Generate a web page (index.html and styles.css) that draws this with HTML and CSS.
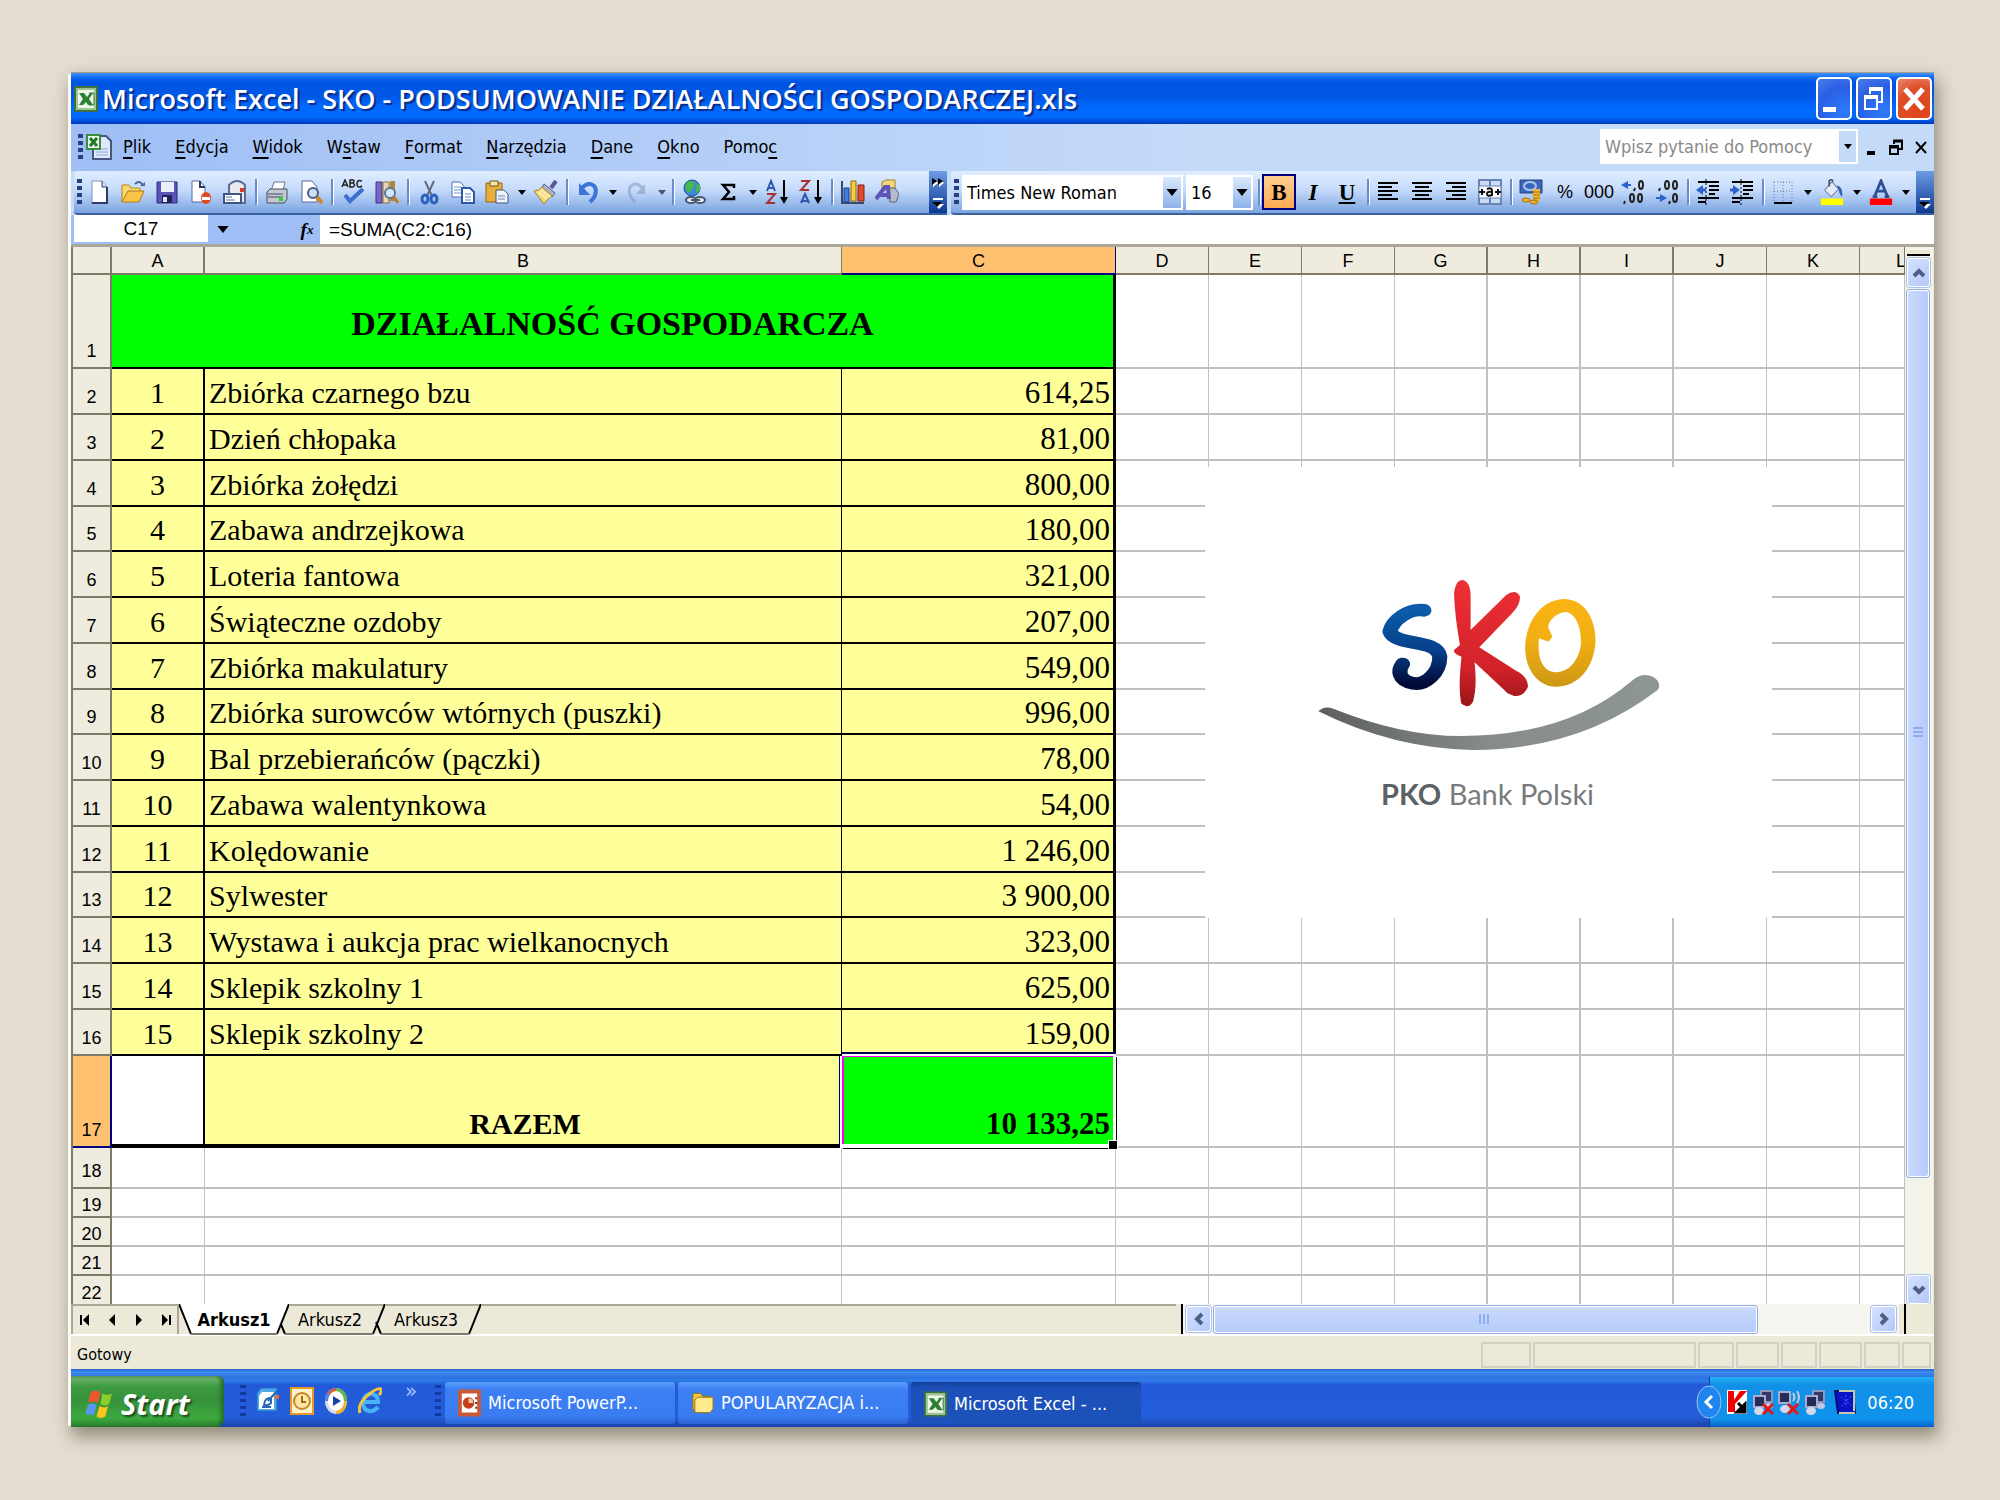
FILE: index.html
```html
<!DOCTYPE html>
<html lang="pl">
<head>
<meta charset="utf-8">
<title>Microsoft Excel - SKO - PODSUMOWANIE DZIAŁALNOŚCI GOSPODARCZEJ.xls</title>
<link rel="stylesheet" href="styles.css">
</head>
<body>
<svg class="defs" aria-hidden="true">
  <defs>
    <linearGradient id="gS" x1="0" y1="0" x2="0" y2="1"><stop offset="0" stop-color="#0c5cab"/><stop offset=".55" stop-color="#06408a"/><stop offset="1" stop-color="#020b38"/></linearGradient>
    <linearGradient id="gK" gradientUnits="userSpaceOnUse" x1="0" y1="360" x2="0" y2="740"><stop offset="0" stop-color="#ee2f35"/><stop offset=".7" stop-color="#d3222a"/><stop offset="1" stop-color="#971418"/></linearGradient>
    <linearGradient id="gO" x1="0" y1="0" x2="0" y2="1"><stop offset="0" stop-color="#fbb414"/><stop offset=".5" stop-color="#f0ae12"/><stop offset="1" stop-color="#cd9716"/></linearGradient>
    <linearGradient id="gG" x1="0" y1="0" x2="1" y2="0"><stop offset="0" stop-color="#5d5f5f"/><stop offset=".5" stop-color="#878b8b"/><stop offset="1" stop-color="#8e9696"/></linearGradient>
  </defs>
  <symbol id="down" viewBox="0 0 8 5"><path d="M0 0h8L4 5z"/></symbol>
  <symbol id="xl" viewBox="0 0 24 26"><path d="M1 1h22v24H1z" fill="#eef6ea" stroke="#3f7040" stroke-width="2"/><path d="M3 3h18v20H3z" fill="none" stroke="#9cc592" stroke-width="2"/><path d="M5 7h5l3 4 3-4h3l-4 6 4 6h-5l-2-3-3 3H5l4-6z" fill="#2d7f35"/><path d="M15 7h5v12h-5" fill="none" stroke="#2d7f35"/></symbol>
  <symbol id="pc" viewBox="0 0 22 26"><path d="M9 2h11v11H9z" fill="#33386b" stroke="#8d97c0" stroke-width="2"/><ellipse cx="17" cy="17" rx="4" ry="3" fill="#c3c7df"/><path d="M2 7h11v11H2z" fill="#262b57" stroke="#a5aecf" stroke-width="2"/><ellipse cx="7" cy="22" rx="5" ry="4" fill="#d5d8ea"/></symbol>
  <symbol id="rx" viewBox="0 0 12 12"><path d="M1 1l10 10M11 1L1 11" stroke="#e01818" stroke-width="3"/></symbol>
</svg>

<main class="window">
  <header class="titlebar">
    <svg class="app-icon"><use href="#xl"/></svg>
    <h1>Microsoft Excel - SKO - PODSUMOWANIE DZIAŁALNOŚCI GOSPODARCZEJ.xls</h1>
    <button class="wbtn" aria-label="Minimalizuj"><svg viewBox="0 0 32 38"><path d="M5 27h13v5H5z" fill="#fff"/></svg></button>
    <button class="wbtn" aria-label="Przywróć"><svg viewBox="0 0 32 38"><path d="M12 14V9h12v13h-4" fill="none" stroke="#fff" stroke-width="2"/><path d="M11 9h14M6 17h14" stroke="#fff" stroke-width="4"/><path d="M7 17h12v12H7z" fill="none" stroke="#fff" stroke-width="2"/></svg></button>
    <button class="wbtn close" aria-label="Zamknij"><svg viewBox="0 0 32 38"><path d="M7 9l18 20M25 9L7 29" stroke="#fff" stroke-width="5"/></svg></button>
  </header>

  <nav class="menubar">
    <span class="grip"></span>
    <svg class="doc-icon" viewBox="0 0 26 28"><path d="M9 3h11l5 5v18H7V10z" fill="#dfe9fb" stroke="#43577f" stroke-width="2"/><path d="M10 16h12M10 19h12M10 22h12" stroke="#8aa6d8"/><path d="M1 2h13v14H1z" fill="#eaf6ea" stroke="#3a8c3e" stroke-width="2"/><path d="M4 5l7 8M11 5l-7 8" stroke="#237a2c" stroke-width="3"/></svg>
    <button><u>P</u>lik</button><button><u>E</u>dycja</button><button><u>W</u>idok</button><button>W<u>s</u>taw</button><button><u>F</u>ormat</button><button><u>N</u>arzędzia</button><button><u>D</u>ane</button><button><u>O</u>kno</button><button>Pomo<u>c</u></button>
    <div class="help"><input type="text" placeholder="Wpisz pytanie do Pomocy" aria-label="Wpisz pytanie do Pomocy"><button aria-label="Rozwiń"><svg class="dd"><use href="#down"/></svg></button></div>
    <div class="docbtns">
      <button aria-label="Minimalizuj skoroszyt"><svg viewBox="0 0 14 16"><path d="M3 12h8v4H3z"/></svg></button>
      <button aria-label="Przywróć skoroszyt"><svg viewBox="0 0 14 16"><path d="M5 5V2h8v8h-3M1 7h8v8H1z" fill="none" stroke="#000" stroke-width="2"/><path d="M4 2h10M0 8h10" stroke="#000" stroke-width="3"/></svg></button>
      <button aria-label="Zamknij skoroszyt"><svg viewBox="0 0 14 16"><path d="M2 3l10 11M12 3L2 14" stroke="#000" stroke-width="2"/></svg></button>
    </div>
  </nav>

  <div class="toolbars">
    <div class="toolbar standard">
      <span class="grip"></span>
      <button aria-label="Nowy"><svg viewBox="0 0 24 26"><path d="M5 2h10l5 6v16H5z" fill="#fff" stroke="#7f93bd"/><path d="M20 8v16H5" fill="none" stroke="#2c3c66" stroke-width="2"/><path d="M15 2v6h5" fill="#cfdcf5" stroke="#2c3c66"/></svg></button>
      <button aria-label="Otwórz"><svg viewBox="0 0 24 26"><path d="M1 23V6h7l2 3h9v4" fill="#f8d671" stroke="#b98519"/><path d="M1 23l6-11h16l-5 11z" fill="#fbc648" stroke="#b07a12"/><path d="M14 5q5-5 8 2" fill="none" stroke="#4c6a9c" stroke-width="2"/><path d="M19 7h5V3z" fill="#4c6a9c"/></svg></button>
      <button aria-label="Zapisz"><svg viewBox="0 0 24 26"><path d="M2 3h20v21H2z" fill="#5a54b8" stroke="#2f2b7c"/><path d="M6 3h13v10H6z" fill="#e9effc"/><path d="M7 16h10v8H7z" fill="#23225a"/><path d="M8 18h4v5H8z" fill="#dfe3f7"/></svg></button>
      <button aria-label="Uprawnienia"><svg viewBox="0 0 24 26"><path d="M3 2h8l5 6v15H3z" fill="#fff" stroke="#566c9a"/><path d="M11 2v6h5" fill="none" stroke="#2c3c66" stroke-width="2"/><ellipse cx="17" cy="19" rx="5" ry="6" fill="#e04a20"/><path d="M13 18h8v3h-8z" fill="#fff"/></svg></button>
      <button aria-label="Poczta"><svg viewBox="0 0 24 26"><path d="M6 13V6q8-8 16 0v18H10z" fill="#e9eaf0" stroke="#5c6d92" stroke-width="2"/><path d="M17 9h4v4h-4z" fill="#de3a22"/><path d="M1 15h17v9H1z" fill="#fff" stroke="#40557f" stroke-width="2"/><path d="M3 18h6M3 21h9" stroke="#4d74b4"/></svg></button>
      <span class="sep"></span>
      <button aria-label="Drukuj"><svg viewBox="0 0 24 26"><path d="M6 12l3-9h11l-2 9z" fill="#fff" stroke="#6b7690"/><path d="M2 13l3-3h17v10l-3 4H2z" fill="#c4c8d2" stroke="#434d66"/><path d="M3 15h15M3 18h15" stroke="#434d66"/><path d="M14 18h4v4h-4z" fill="#2bd234"/></svg></button>
      <button aria-label="Podgląd"><svg viewBox="0 0 24 26"><path d="M3 2h10l5 6v15H3z" fill="#fff" stroke="#566c9a"/><circle cx="14" cy="14" r="5" fill="#cbe1fa" stroke="#48607e" stroke-width="2"/><path d="M18 18l5 6" stroke="#d1852a" stroke-width="4"/></svg></button>
      <span class="sep"></span>
      <button aria-label="Pisownia"><svg viewBox="0 0 24 26"><path d="M1 8l3-7 3 7M2 6h4M9 1v7h3q3-2 0-4h-3h3q2-2 0-3zM21 2q-5-2-5 3t5 2" fill="none" stroke="#222" stroke-width="1.5"/><path d="M4 16l5 6L22 10" fill="none" stroke="#3d70cf" stroke-width="4"/></svg></button>
      <button aria-label="Poszukaj"><svg viewBox="0 0 24 26"><path d="M1 3h6v21H1z" fill="#7a66c4" stroke="#3f3286"/><path d="M8 3h6v21H8z" fill="#e5d9b3" stroke="#85713a"/><path d="M15 2h5v20h-5z" fill="#b3863b"/><circle cx="15" cy="14" r="5" fill="#d5e7fb" stroke="#61778e" stroke-width="2"/><path d="M19 18l4 6" stroke="#bb7f23" stroke-width="3"/></svg></button>
      <span class="sep"></span>
      <button aria-label="Wytnij"><svg viewBox="0 0 24 26"><path d="M8 2l7 15M17 2l-7 15" stroke="#5e6b80" stroke-width="2"/><ellipse cx="8" cy="20" rx="3" ry="4" fill="none" stroke="#2b5fc0" stroke-width="3"/><ellipse cx="17" cy="20" rx="3" ry="4" fill="none" stroke="#2b5fc0" stroke-width="3"/></svg></button>
      <button aria-label="Kopiuj"><svg viewBox="0 0 24 26"><path d="M1 3h8l4 4v11H1z" fill="#fff" stroke="#4b70b8"/><path d="M3 8h7M3 11h7M3 14h7" stroke="#6d93d8"/><path d="M11 9h8l4 4v11H11z" fill="#fff" stroke="#2f57a4" stroke-width="2"/><path d="M14 15h6M14 18h6M14 21h6" stroke="#5d87d4"/></svg></button>
      <button aria-label="Wklej"><svg viewBox="0 0 24 26"><path d="M1 4h16v19H1z" fill="#e9ae3a" stroke="#94670f"/><path d="M5 2h8v5H5z" fill="#f4e7a8" stroke="#6b5a1a"/><path d="M11 11h8l4 4v9H11z" fill="#eef3fd" stroke="#40557f"/><path d="M13 17h7M13 20h7" stroke="#6b85b8"/></svg></button>
      <button class="drop" aria-label="Opcje wklejania"><svg class="dd"><use href="#down"/></svg></button>
      <button aria-label="Malarz formatów"><svg viewBox="0 0 24 26"><path d="M17 9l5-7" stroke="#5a559c" stroke-width="4"/><path d="M10 5l11 9-3 4L8 9z" fill="#a9b4c9" stroke="#59637a"/><path d="M8 8l10 9q-5 3-8 8L0 12q5 0 8-4z" fill="#f3d873" stroke="#a58422"/><path d="M4 13l9 7M7 11l9 7" stroke="#fbf0b8" stroke-width="2"/></svg></button>
      <span class="sep"></span>
      <button aria-label="Cofnij"><svg viewBox="0 0 24 26"><path d="M5 10q8-9 14-2 3 8-5 15" fill="none" stroke="#3b74d8" stroke-width="4"/><path d="M3 4v12h11z" fill="#3b74d8"/></svg></button>
      <button class="drop" aria-label="Lista cofania"><svg class="dd"><use href="#down"/></svg></button>
      <button class="dim" aria-label="Ponów"><svg viewBox="0 0 24 26"><path d="M18 10Q11 1 5 8q-3 8 5 15" fill="none" stroke="#8b9cbd" stroke-width="3"/><path d="M20 5v10H11z" fill="#8b9cbd"/></svg></button>
      <button class="drop dim" aria-label="Lista ponawiania"><svg class="dd"><use href="#down"/></svg></button>
      <span class="sep"></span>
      <button aria-label="Hiperłącze"><svg viewBox="0 0 24 26"><circle cx="10" cy="9" r="8" fill="#3d87df" stroke="#255192"/><path d="M4 4q6-4 9 0l-2 5-4 5q-5-4-3-10M14 6l4-1 0 6-4 4z" fill="#47b84b"/><ellipse cx="9" cy="21" rx="5" ry="3" fill="#e4e9f2" stroke="#4a5872" stroke-width="2"/><ellipse cx="18" cy="21" rx="5" ry="3" fill="#e4e9f2" stroke="#4a5872" stroke-width="2"/><path d="M9 21h9" stroke="#4a5872" stroke-width="2"/></svg></button>
      <button aria-label="Autosumowanie"><svg viewBox="0 0 24 26"><path d="M18 9V6H7l6 7-6 7h11v-3" fill="none" stroke="#000" stroke-width="2.5"/></svg></button>
      <button class="drop" aria-label="Funkcje"><svg class="dd"><use href="#down"/></svg></button>
      <button aria-label="Sortuj rosnąco"><svg class="sort" viewBox="0 0 24 26"><path d="M2 12L6 2l4 10M3 9h6" fill="none" stroke="#2b58ac" stroke-width="2"/><path d="M2 15h8l-8 9h8" fill="none" stroke="#a83232" stroke-width="2"/><path d="M19 1v22" stroke="#000" stroke-width="2"/><path d="M15 18h8l-4 7z"/></svg></button>
      <button aria-label="Sortuj malejąco"><svg class="sort" viewBox="0 0 24 26"><path d="M2 24l4-9 4 9M3 22h6" fill="none" stroke="#2b58ac" stroke-width="2"/><path d="M2 2h8l-8 9h8" fill="none" stroke="#a83232" stroke-width="2"/><path d="M19 1v22" stroke="#000" stroke-width="2"/><path d="M15 18h8l-4 7z"/></svg></button>
      <span class="sep"></span>
      <button aria-label="Kreator wykresów"><svg viewBox="0 0 24 26"><path d="M1 2v22h22" fill="none" stroke="#3c4963" stroke-width="2"/><path d="M3 9h5v14H3z" fill="#3f7ce0" stroke="#1d3f86"/><path d="M10 2h5v20h-5z" fill="#f5ce3c" stroke="#8f6b0c"/><path d="M17 6h6v16h-6z" fill="#e04b2a" stroke="#84200e"/></svg></button>
      <button aria-label="Rysowanie"><svg viewBox="0 0 24 26"><path d="M7 3l4-2h9v10H7z" fill="#f5d67a" stroke="#a98423"/><path d="M14 9h6l4 6-3 8h-6z" fill="#b5bccb" stroke="#5b6478"/><path d="M1 20L10 8h3l1 12M5 16h8" fill="none" stroke="#5e55b8" stroke-width="4"/></svg></button>
      <button class="cap" aria-label="Opcje paska Standardowy"><svg viewBox="0 0 18 44"><path d="M4 9l5 4-5 4zM10 9l5 4-5 4z" fill="#fff"/><path d="M3 8l5 3-5 4zM9 8l5 3-5 4z"/><path d="M4 28h10v2H4z" fill="#fff"/><path d="M5 34h10l-5 5z" fill="#fff"/><path d="M3 32h10l-5 5z"/></svg></button>
    </div>
    <div class="toolbar format">
      <span class="grip"></span>
      <span class="combo font"><select aria-label="Czcionka"><option>Times New Roman</option></select><i><svg class="dd big"><use href="#down"/></svg></i></span>
      <span class="combo size"><select aria-label="Rozmiar czcionki"><option>16</option></select><i><svg class="dd big"><use href="#down"/></svg></i></span>
      <span class="sep"></span>
      <button class="glyph on" aria-label="Pogrubienie" aria-pressed="true"><b>B</b></button>
      <button class="glyph" aria-label="Kursywa"><em>I</em></button>
      <button class="glyph" aria-label="Podkreślenie"><u>U</u></button>
      <span class="sep"></span>
      <button aria-label="Do lewej"><svg viewBox="0 0 24 26"><path d="M2 4h20M2 8h14M2 12h20M2 16h14M2 20h20" stroke="#000" stroke-width="2"/></svg></button>
      <button aria-label="Do środka"><svg viewBox="0 0 24 26"><path d="M2 4h20M5 8h14M2 12h20M5 16h14M2 20h20" stroke="#000" stroke-width="2"/></svg></button>
      <button aria-label="Do prawej"><svg viewBox="0 0 24 26"><path d="M2 4h20M8 8h14M2 12h20M8 16h14M2 20h20" stroke="#000" stroke-width="2"/></svg></button>
      <button aria-label="Scal i wyśrodkuj"><svg viewBox="0 0 24 26"><path d="M1 1h22v24H1z" fill="#c9dbf5" stroke="#6884b4" stroke-width="2"/><path d="M12 1v24" stroke="#6884b4" stroke-width="2"/><path d="M1 7h22v12H1z" fill="#fff" stroke="#6884b4"/><path d="M1 13h6M17 13h6M4 10v6M20 10v6" stroke="#111" stroke-width="2"/><path d="M9 10q5-2 5 2v5M14 13q-5-1-5 2t5 1" fill="none" stroke="#111" stroke-width="2"/></svg></button>
      <span class="sep"></span>
      <button aria-label="Zapis walutowy"><svg viewBox="0 0 24 26"><path d="M1 1h22v13H1z" fill="#3c67b8" stroke="#274583"/><ellipse cx="11" cy="7" rx="6" ry="4" fill="none" stroke="#a9c4ee" stroke-width="2"/><path d="M14 10h7v12h-7z" fill="#f2b632"/><path d="M14 13h7M14 16h7M14 19h7" stroke="#a4700c"/><ellipse cx="7" cy="21" rx="4" ry="2" fill="#efb12b" stroke="#a4700c"/><ellipse cx="15" cy="23" rx="4" ry="2" fill="#efb12b" stroke="#a4700c"/></svg></button>
      <button class="num" aria-label="Zapis procentowy">%</button>
      <button class="num" aria-label="Zapis dziesiętny">000</button>
      <button class="dec" aria-label="Zwiększ dziesiętne"><svg viewBox="0 0 24 26"><path d="M7 2v8L0 6z" fill="#2b62cc"/><path d="M6 6h4" stroke="#2b62cc" stroke-width="2"/><path d="M14 9l-1 3M4 22l-1 3" stroke="#222" stroke-width="2"/><g fill="none" stroke="#222" stroke-width="2"><ellipse cx="20" cy="6" rx="2" ry="4"/><ellipse cx="11" cy="19" rx="2" ry="4"/><ellipse cx="19" cy="19" rx="2" ry="4"/></g></svg></button>
      <button class="dec" aria-label="Zmniejsz dziesiętne"><svg viewBox="0 0 24 26"><path d="M5 15v8l7-4z" fill="#2b62cc"/><path d="M1 19h6" stroke="#2b62cc" stroke-width="2"/><path d="M5 9l-1 3M15 22l-1 3" stroke="#222" stroke-width="2"/><g fill="none" stroke="#222" stroke-width="2"><ellipse cx="12" cy="6" rx="2" ry="4"/><ellipse cx="20" cy="6" rx="2" ry="4"/><ellipse cx="20" cy="19" rx="2" ry="4"/></g></svg></button>
      <span class="sep"></span>
      <button aria-label="Zmniejsz wcięcie"><svg viewBox="0 0 24 26"><path d="M2 3h21M13 7h10M13 11h10M13 15h6M2 19h21M2 23h8" stroke="#000" stroke-width="2"/><path d="M10 0v26" stroke="#000" stroke-dasharray="2 2"/><path d="M7 6v10L0 11z" fill="#2b62cc"/><path d="M6 11h4" stroke="#2b62cc" stroke-width="3"/></svg></button>
      <button aria-label="Zwiększ wcięcie"><svg viewBox="0 0 24 26"><path d="M2 3h21M13 7h10M13 11h10M13 15h6M2 19h21M2 23h8" stroke="#000" stroke-width="2"/><path d="M11 0v26" stroke="#000" stroke-dasharray="2 2"/><path d="M3 6v10l7-5z" fill="#2b62cc"/><path d="M0 11h4" stroke="#2b62cc" stroke-width="3"/></svg></button>
      <span class="sep"></span>
      <button aria-label="Obramowanie"><svg viewBox="0 0 24 26"><path d="M3 3h18v19M3 3v19M12 3v19M3 12h18" fill="none" stroke="#667796" stroke-dasharray="1 2"/><path d="M3 24h18" stroke="#000" stroke-width="2"/></svg></button>
      <button class="drop" aria-label="Rodzaje obramowania"><svg class="dd"><use href="#down"/></svg></button>
      <button aria-label="Kolor wypełnienia"><svg viewBox="0 0 24 28"><path d="M4 12l8-9 7 8-8 8z" fill="#e3ebf8" stroke="#46587a"/><path d="M9 8V2q3-3 4 1" fill="none" stroke="#46587a" stroke-width="2"/><path d="M17 7q7 1 6 12-3-1-4-8z" fill="#2f62bb"/><path d="M0 21h24v7H0z" fill="#ff0"/></svg></button>
      <button class="drop" aria-label="Kolory wypełnienia"><svg class="dd"><use href="#down"/></svg></button>
      <button aria-label="Kolor czcionki"><svg viewBox="0 0 24 28"><path d="M5 19l7-17 7 17M8 13h8M3 19h5M16 19h5" fill="none" stroke="#2f4f92" stroke-width="3"/><path d="M0 21h24v7H0z" fill="red"/></svg></button>
      <button class="drop" aria-label="Kolory czcionki"><svg class="dd"><use href="#down"/></svg></button>
      <button class="cap" aria-label="Opcje paska Formatowanie"><svg viewBox="0 0 18 44"><path d="M4 28h10v2H4z" fill="#fff"/><path d="M5 34h10l-5 5z" fill="#fff"/><path d="M3 32h10l-5 5z"/></svg></button>
    </div>
  </div>

  <div class="formulabar">
    <input class="namebox" value="C17" aria-label="Pole nazwy">
    <button class="namedrop" aria-label="Lista nazw"><svg class="dd big"><use href="#down"/></svg></button>
    <button class="fx" aria-label="Wstaw funkcję"><i>f</i><small>x</small></button>
    <input class="formula" value="=SUMA(C2:C16)" aria-label="Pasek formuły">
  </div>

  <div class="workspace">
    <div class="sheet">
      <table>
        <colgroup><col class="c-head"><col class="c-n"><col class="c-b"><col class="c-c"><col class="c-n"><col class="c-n"><col class="c-n"><col class="c-n"><col class="c-n"><col class="c-n"><col class="c-n"><col class="c-n"><col></colgroup>
        <thead><tr><th><th>A<th>B<th class="cur">C<th>D<th>E<th>F<th>G<th>H<th>I<th>J<th>K<th class="last">L</tr></thead>
        <tbody>
        <tr class="r1"><th>1<td class="banner" colspan="3">DZIAŁALNOŚĆ GOSPODARCZA<td><td><td><td><td><td><td><td><td></tr>
        <tr class="d"><th>2<td>1<td>Zbiórka czarnego bzu<td>614,25<td><td><td><td><td><td><td><td><td></tr>
        <tr class="d"><th>3<td>2<td>Dzień chłopaka<td>81,00<td><td><td><td><td><td><td><td><td></tr>
        <tr class="d"><th>4<td>3<td>Zbiórka żołędzi<td>800,00<td><td><td><td><td><td><td><td><td></tr>
        <tr class="d"><th>5<td>4<td>Zabawa andrzejkowa<td>180,00<td><td><td><td><td><td><td><td><td></tr>
        <tr class="d"><th>6<td>5<td>Loteria fantowa<td>321,00<td><td><td><td><td><td><td><td><td></tr>
        <tr class="d"><th>7<td>6<td>Świąteczne ozdoby<td>207,00<td><td><td><td><td><td><td><td><td></tr>
        <tr class="d"><th>8<td>7<td>Zbiórka makulatury<td>549,00<td><td><td><td><td><td><td><td><td></tr>
        <tr class="d"><th>9<td>8<td>Zbiórka surowców wtórnych (puszki)<td>996,00<td><td><td><td><td><td><td><td><td></tr>
        <tr class="d"><th>10<td>9<td>Bal przebierańców (pączki)<td>78,00<td><td><td><td><td><td><td><td><td></tr>
        <tr class="d"><th>11<td>10<td>Zabawa walentynkowa<td>54,00<td><td><td><td><td><td><td><td><td></tr>
        <tr class="d"><th>12<td>11<td>Kolędowanie<td>1 246,00<td><td><td><td><td><td><td><td><td></tr>
        <tr class="d"><th>13<td>12<td>Sylwester<td>3 900,00<td><td><td><td><td><td><td><td><td></tr>
        <tr class="d"><th>14<td>13<td>Wystawa i aukcja prac wielkanocnych<td>323,00<td><td><td><td><td><td><td><td><td></tr>
        <tr class="d"><th>15<td>14<td>Sklepik szkolny 1<td>625,00<td><td><td><td><td><td><td><td><td></tr>
        <tr class="d"><th>16<td>15<td>Sklepik szkolny 2<td>159,00<td><td><td><td><td><td><td><td><td></tr>
        <tr class="d total"><th class="cur">17<td><td>RAZEM<td class="selected">10 133,25<td><td><td><td><td><td><td><td><td></tr>
        <tr class="r18"><th>18<td><td><td><td><td><td><td><td><td><td><td><td></tr>
        <tr class="s"><th>19<td><td><td><td><td><td><td><td><td><td><td><td></tr>
        <tr class="s"><th>20<td><td><td><td><td><td><td><td><td><td><td><td></tr>
        <tr class="s"><th>21<td><td><td><td><td><td><td><td><td><td><td><td></tr>
        <tr class="s end"><th>22<td><td><td><td><td><td><td><td><td><td><td><td></tr>
        </tbody>
      </table>
      <svg class="logo" viewBox="0 0 567 451" role="img" aria-label="SKO PKO Bank Polski">
        <g transform="translate(-25 -7) scale(.3954 .3333)" fill="none" stroke-linecap="round" stroke-linejoin="round">
          <path d="M617 451C580 444 537 480 531 515C545 560 650 535 657 590C657 640 620 676 590 670C550 660 552 630 563 612" stroke="url(#gS)" stroke-width="38"/>
          <path d="M693 400Q697 360 715 360Q735 365 735 410L735 510L825 405Q850 385 860 410Q860 435 840 460L757 562L850 632Q880 650 880 680Q870 710 845 708Q825 700 820 690L745 607Q752 680 741 725Q728 750 711 730Q703 680 712 590Q690 580 693 570L708 555Q695 470 693 400Z" fill="url(#gK)"/>
          <path fill-rule="evenodd" d="M970 417C1025 417 1052 480 1051 545C1047 620 1010 680 950 680C900 678 872 620 873 560C875 490 910 420 970 417ZM974 456C955 458 930 480 932 505L942 530L932 545L908 535C903 590 915 637 952 637C990 635 1012 590 1014 550C1015 500 1000 458 974 456Z" fill="url(#gO)"/>
          <path d="M350 754Q364 736 388 746Q560 828 710 828Q980 828 1143 662Q1168 636 1196 650Q1220 668 1208 690Q1010 870 740 870Q540 866 350 754Z" fill="url(#gG)"/>
        </g>
        <text x="176" y="338"><tspan class="pko">PKO</tspan> Bank Polski</text>
      </svg>
    </div>
    <div class="vscroll">
      <span class="splitter"></span>
      <button aria-label="W górę"><svg viewBox="0 0 14 14"><path d="M2 10l5-5 5 5" fill="none" stroke="#4d6185" stroke-width="4"/></svg></button>
      <div class="track"><div class="thumb"></div></div>
      <button aria-label="W dół"><svg viewBox="0 0 14 14"><path d="M2 4l5 5 5-5" fill="none" stroke="#4d6185" stroke-width="4"/></svg></button>
    </div>
  </div>

  <div class="tabbar">
    <div class="tabnav">
      <button aria-label="Pierwszy"><svg viewBox="0 0 12 12"><path d="M2 1v10" stroke="#000" stroke-width="2"/><path d="M10 0v12L4 6z"/></svg></button>
      <button aria-label="Poprzedni"><svg viewBox="0 0 12 12"><path d="M9 0v12L3 6z"/></svg></button>
      <button aria-label="Następny"><svg viewBox="0 0 12 12"><path d="M3 0v12l6-6z"/></svg></button>
      <button aria-label="Ostatni"><svg viewBox="0 0 12 12"><path d="M10 1v10" stroke="#000" stroke-width="2"/><path d="M2 0v12l6-6z"/></svg></button>
    </div>
    <div class="tabs">
      <button class="tab active"><svg viewBox="0 0 110 31"><path d="M0 0l12 30h86l12-30z" fill="#fff"/><path d="M0 0l12 30M98 30l12-30" stroke="#000" stroke-width="2"/><path d="M12 30h86" stroke="#7d7a68" stroke-width="2"/></svg><span>Arkusz1</span></button>
      <button class="tab"><svg viewBox="0 0 110 31"><path d="M5 18l5 12M98 30l12-30" stroke="#000" stroke-width="2"/><path d="M10 30h88" stroke="#7d7a68" stroke-width="2"/></svg><span>Arkusz2</span></button>
      <button class="tab"><svg viewBox="0 0 110 31"><path d="M5 18l5 12M98 30l12-30" stroke="#000" stroke-width="2"/><path d="M10 30h88" stroke="#7d7a68" stroke-width="2"/></svg><span>Arkusz3</span></button>
    </div>
    <div class="hscroll">
      <span class="split"></span>
      <button aria-label="W lewo"><svg viewBox="0 0 14 14"><path d="M10 2L5 7l5 5" fill="none" stroke="#4d6185" stroke-width="4"/></svg></button>
      <div class="track"><div class="thumb"></div></div>
      <button aria-label="W prawo"><svg viewBox="0 0 14 14"><path d="M4 2l5 5-5 5" fill="none" stroke="#4d6185" stroke-width="4"/></svg></button>
      <span class="split"></span>
    </div>
  </div>

  <div class="status"><span class="msg">Gotowy</span><i class="w50"></i><i class="w163"></i><i></i><i class="w43"></i><i></i><i class="w43"></i><i></i><i class="w29"></i></div>

  <footer class="taskbar">
    <button class="start"><svg viewBox="0 0 28 32"><path d="M5 4q5-4 10 0l-3 11q-5-3-10 0z" fill="#f0562b"/><path d="M17 5q5 3 10 0l-3 11q-5 3-9 0z" fill="#8ccf2c"/><path d="M2 17q5-3 9 0l-3 11q-4-3-9 0z" fill="#5b95f5"/><path d="M14 18q5 3 9 0l-3 11q-5 3-9 0z" fill="#fbc51f"/></svg><span>Start</span></button>
    <div class="quick">
      <span class="dots"></span>
      <button aria-label="Pulpit"><svg viewBox="0 0 24 28"><path d="M5 1h16v23H1V6z" fill="#4ea8ea" stroke="#1c6fc0"/><path d="M3 9l3-4h12v17H3z" fill="#fff"/><path d="M8 18q4 1 7-2v-5q-6-1-7 7zM12 14l9-10M6 20h9" fill="none" stroke="#2568b8" stroke-width="2"/><path d="M19 8h4v4h-4z" fill="#ef6a3a"/></svg></button>
      <button aria-label="Outlook"><svg viewBox="0 0 24 28"><path d="M1 1h22v26H1z" fill="#fff1c8" stroke="#e49a25" stroke-width="2"/><circle cx="12" cy="14" r="8" fill="#ffe6a2" stroke="#c4862a" stroke-width="2"/><path d="M12 9v6h4" fill="none" stroke="#a36a14" stroke-width="2"/></svg></button>
      <button aria-label="Odtwarzacz"><svg viewBox="0 0 24 28"><ellipse cx="12" cy="14" rx="11" ry="13" fill="#d9d9e8"/><path d="M12 1q-11 0-11 13h11z" fill="#4f80e0"/><path d="M12 1q11 1 11 13H12z" fill="#5fb74d"/><path d="M3 7q3-5 9-6v6z" fill="#e45b35"/><path d="M12 27q10 0 11-13H12z" fill="#f0b12c"/><ellipse cx="12" cy="14" rx="8" ry="10" fill="#fff"/><path d="M9 9l8 5-8 5z" fill="#1c3fa8"/></svg></button>
      <button aria-label="Internet Explorer"><svg viewBox="0 0 24 28"><path d="M20 20q-4 5-9 4-6-1-6-9 1-8 8-8 7 0 7 8H6" fill="none" stroke="#48b4f8" stroke-width="4"/><path d="M2 26q-3-8 7-17T23 2q1 3-2 6" fill="none" stroke="#f5c63a" stroke-width="3"/></svg></button>
      <span class="more">»</span>
      <span class="dots"></span>
    </div>
    <button class="task"><svg viewBox="0 0 24 28"><path d="M2 2h20v24H2z" fill="#fff" stroke="#c95a38" stroke-width="4"/><circle cx="11" cy="14" r="6" fill="#c23f1c"/><path d="M11 14V9a5 5 0 0 1 5 5z" fill="#f8c4a8"/><path d="M19 8v2M19 13v2M19 18v2" stroke="#7c2a12" stroke-width="2"/></svg><span>Microsoft PowerP...</span></button>
    <button class="task"><svg viewBox="0 0 24 28"><path d="M2 21V4h8l2 3h8v14z" fill="#f3c63f" stroke="#9a7310"/><path d="M4 24V11l3-3h16v12l-3 4z" fill="#ffe98c" stroke="#9a7310"/></svg><span>POPULARYZACJA i...</span></button>
    <button class="task active"><svg><use href="#xl"/></svg><span>Microsoft Excel - ...</span></button>
    <div class="tray">
      <button class="expand" aria-label="Pokaż ukryte ikony"><svg viewBox="0 0 26 34"><ellipse cx="13" cy="17" rx="12" ry="16" fill="#1e86ee" stroke="#9fc3e8"/><path d="M16 11l-6 6 6 6" fill="none" stroke="#fff" stroke-width="3"/></svg></button>
      <svg viewBox="0 0 22 26"><path d="M1 1h20v24H1z" fill="#fff"/><path d="M2 2h6v9l6-9h7L9 15v8H2z" fill="#f00000"/><path d="M12 14l7 7M19 15v8h-8z" stroke="#000" stroke-width="3"/></svg>
      <svg viewBox="0 0 22 26"><use href="#pc" width="22" height="26"/><use href="#rx" x="10" y="14" width="12" height="12"/></svg>
      <svg viewBox="0 0 22 26"><path d="M1 3h11v11H1z" fill="#262b57" stroke="#a5aecf" stroke-width="2"/><ellipse cx="7" cy="20" rx="5" ry="4" fill="#d5d8ea"/><path d="M15 4q3 4 0 8M19 2q4 6 0 12" fill="none" stroke="#c6cbe0" stroke-width="2"/><use href="#rx" x="9" y="14" width="12" height="12"/></svg>
      <svg viewBox="0 0 22 26"><use href="#pc" width="22" height="26"/></svg>
      <svg class="book" viewBox="0 0 22 26"><path d="M1 2h18l2 22H4z" fill="#0a12c8" stroke="#0a0f6a" stroke-width="2"/><path d="M5 2h15v20M5 24h16" fill="none" stroke="#c9c7a8" stroke-width="2"/><path d="M7 8l10 8M17 7L8 17M12 6v12" stroke="#4b62ff" stroke-dasharray="2 2"/></svg>
      <time>06:20</time>
    </div>
  </footer>
</main>
</body>
</html>
```

FILE: styles.css
```css
* { box-sizing: border-box; }

body {
  margin: 0;
  padding: 73px 66px 73px 71px;
  background: #e4ddd1;
  color: #000;
  font-family: "DejaVu Sans Condensed", "Noto Sans", sans-serif;
  font-size: 18px;
}

button, input, select {
  margin: 0;
  padding: 0;
  border: 0;
  border-radius: 0;
  background: none;
  color: inherit;
  font: inherit;
}

button { display: flex; align-items: center; justify-content: center; flex: none; white-space: nowrap; }
svg { display: block; flex: none; }
.defs { position: absolute; width: 0; height: 0; }
.dd { width: 8px; height: 5px; }
.dd.big { width: 12px; height: 7px; }

.window {
  background: #ece9d8;
  box-shadow: -4px 0 0 -1px #fbfaf7, 0 -1px 0 #a59f92, 2px 8px 16px 2px rgba(80, 74, 56, .55);
}

/* Title bar */
.titlebar {
  display: flex;
  align-items: center;
  gap: 4px;
  height: 51px;
  padding: 0 2px 0 3px;
  background: linear-gradient(#3f93fb 0, #0a66f2 5px, #0054e3 9px, #0057e6 24px, #0069fd 34px, #006aff 44px, #0047d2 49px, #0038b8);
}
.app-icon { width: 24px; height: 28px; }
.titlebar h1 {
  flex: 1;
  margin: 0;
  overflow: hidden;
  color: #fff;
  font: 600 27px/44px "Open Sans", sans-serif;
  text-shadow: 2px 2px 1px #0a2a8a;
  white-space: nowrap;
}
.wbtn {
  width: 36px;
  height: 43px;
  border: 2px solid #fff;
  border-radius: 5px;
  background: radial-gradient(circle at 80% 85%, #2d7bff, #2a5fe4 60%, #4d7ee8);
}
.wbtn svg { width: 32px; height: 38px; }
.wbtn.close { background: radial-gradient(circle at 70% 80%, #e0431a, #dd4f2a 60%, #ec8b70); }

/* Menu bar */
.menubar {
  display: flex;
  align-items: center;
  gap: 24px;
  height: 47px;
  padding: 0 0 2px 7px;
  background: linear-gradient(90deg, #9ebef5, #c4daf9 60%);
}
.grip {
  flex: none;
  width: 5px;
  height: 26px;
  background: repeating-linear-gradient(#27417f 0 4px, transparent 4px 7px);
}
.doc-icon { width: 26px; height: 28px; margin: 0 -13px 0 -21px; }
.menubar u { text-underline-offset: 4px; text-decoration-thickness: 2px; }
.help { display: flex; flex: none; width: 258px; height: 35px; margin-left: auto; padding: 2px; background: #fff; }
.help input { flex: 1; min-width: 0; padding-left: 3px; }
.help input::placeholder { color: #8a8a8a; opacity: 1; }
.help button { width: 17px; background: #c4daf9; }
.docbtns { display: flex; gap: 11px; margin: 0 6px 0 -18px; }
.docbtns svg { width: 14px; height: 16px; }

/* Toolbars */
.toolbars { display: flex; gap: 4px; height: 44px; padding-left: 3px; background: #c4daf9; }
.toolbar {
  display: flex;
  align-items: center;
  overflow: hidden;
  border-bottom: 2px solid #3b619c;
  border-radius: 4px 0 0 4px;
  background: linear-gradient(#dfedff, #c5dbfb 45%, #7ba4e0);
}
.toolbar > button { width: 34px; height: 36px; }
.toolbar > button svg { width: 24px; height: 26px; }
.toolbar > .drop { width: 15px; }
.toolbar > button .dd { width: 8px; height: 5px; }
.toolbar > .dim { opacity: .6; }
.toolbar .grip { margin-left: 3px; }
.sep { flex: none; width: 8px; height: 26px; background: linear-gradient(90deg, transparent 3px, #6a8ccb 3px 5px, #fff 5px 6px, transparent 6px); }
.toolbar > .cap { width: 18px; height: 44px; margin-left: auto; background: linear-gradient(#6f9fe6, #0b3690); }
.toolbar > .cap svg { width: 18px; height: 44px; }
.standard { flex: 0 0 873px; }
.format { flex: 1; min-width: 0; }
.format .sep { width: 7px; }
.combo { display: flex; flex: none; height: 35px; margin-left: 3px; padding: 2px; background: #fff; }
.combo.font { width: 221px; }
.combo.size { width: 67px; margin-right: 2px; }
.combo select { flex: 1; min-width: 0; padding-left: 3px; appearance: none; background: #fff; }
.combo i { display: flex; align-items: center; justify-content: center; width: 18px; background: linear-gradient(#dbe9fd, #8db2ea); }
.glyph { font: bold 23px/1 "Liberation Serif", serif; }
.toolbar > .on { border: 2px solid #000080; background: linear-gradient(#ffcf8f, #ffa953); }
.num { font: 18px/1 "Liberation Sans Narrow", "Liberation Sans", sans-serif; }

/* Formula bar */
.formulabar {
  display: flex;
  height: 32px;
  padding-left: 3px;
  border-bottom: 3px solid #aca899;
  background: #9ebef5;
  font: 19px/27px "Liberation Sans", sans-serif;
}
.namebox { width: 134px; height: 27px; background: #fff; text-align: center; }
.namedrop { width: 30px; height: 28px; }
.fx { width: 26px; height: 28px; margin-left: 56px; font-family: "Liberation Serif", serif; font-weight: bold; }
.fx small { font-size: 13px; font-style: italic; }
.formula { flex: 1; min-width: 0; padding-left: 9px; background: #fff; }

/* Sheet */
.workspace { display: flex; border-left: 2px solid #7d7a68; background: #fff; }
.sheet { position: relative; flex: 1; min-width: 0; overflow: hidden; }
table { width: 100%; border-spacing: 0; table-layout: fixed; }
.c-head { width: 39px; }
.c-n { width: 93px; }
.c-b { width: 637px; }
.c-c { width: 274px; }
th, td { overflow: hidden; padding: 0; border: 0 solid #c0c0c0; border-width: 0 1px 2px 0; vertical-align: bottom; white-space: nowrap; }
th { border-color: #7d7a68; background: #efebde; font: 18px/20px "Liberation Sans", sans-serif; }
thead th { height: 28px; padding-bottom: 2px; }
tbody th { padding-bottom: 6px; border-right-width: 2px; }
thead th:nth-child(-n+2), tr > :nth-last-child(n+4):nth-last-child(-n+6) { border-right-width: 2px; }
thead .last { padding-left: 36px; text-align: left; }
th.cur { border-color: #000080; background: #ffc06f; }
.r1 > * { height: 94px; }
.d > * { height: 46px; }
.d:nth-child(4n+1) > * { height: 45px; }
.d.total > * { height: 92px; }
.r18 > * { height: 41px; }
.s > * { height: 29px; }
.s th { padding-bottom: 1px; }
.end > * { height: 28px; border-bottom-width: 0; }
td { font: 30px/36px "Liberation Serif", serif; }
.banner { padding-top: 6px; border-color: #000; border-right-width: 3px; background: #0f0; font-size: 34px; font-weight: bold; text-align: center; vertical-align: middle; }
.d td:nth-child(-n+4) { padding-bottom: 2px; border-color: #000; background: #ff9; }
.d td:nth-child(2) { border-right-width: 2px; text-align: center; }
.d td:nth-child(3) { padding-left: 4px; }
.d td:nth-child(4) { padding-right: 3px; border-right-width: 3px; font-size: 31px; text-align: right; }
.total td:nth-child(-n+4) { border-bottom-width: 4px; font-weight: bold; }
.total td:nth-child(2) { background: #fff; }
.total td:nth-child(3) { text-align: center; }
.total td.selected { position: relative; overflow: visible; border-color: #fff; background: #0f0; box-shadow: inset 2px 1px #ff00ff, 0 -2px #fff, 0 -4px #000060, -2px 0 #fff, -3px 0 #000060, 1px 1px #000; }
.selected::after { content: ""; position: absolute; right: -5px; bottom: -6px; width: 8px; height: 8px; border: 1px solid #fff; background: #000; }
.logo { position: absolute; left: 1132px; top: 220px; width: 567px; height: 451px; background: #fff; }
.logo text { fill: #777b7e; font: 29px "Lato", sans-serif; }
.logo .pko { fill: #5d6164; font-weight: bold; }

/* Scroll bars */
.vscroll { display: flex; flex-direction: column; flex: none; width: 29px; padding: 3px 3px 0 2px; background: #f4f3ea; border-right: 1px solid #ece9d8; }
.splitter { height: 6px; margin-bottom: 2px; border-bottom: 2px solid #000; background: #ece9d8; }
.vscroll button, .hscroll button { border: 1px solid #fff; border-radius: 3px; background: linear-gradient(135deg, #d5e1ff, #b4c9f8); box-shadow: 0 0 0 1px #a9c0ee; }
.vscroll button { width: 23px; height: 29px; }
.vscroll svg, .hscroll svg { width: 14px; height: 14px; }
.track { flex: 1; }
.thumb { border: 1px solid #fff; border-radius: 3px; box-shadow: 0 0 0 1px #8fade4; }
.vscroll .track { padding-top: 3px; }
.vscroll .thumb { width: 22px; height: 90%; background: repeating-linear-gradient(#8faef0 0 2px, transparent 2px 4px) center / 10px 12px no-repeat, linear-gradient(90deg, #cbdafd, #b5cbfa); }
.tabbar { display: flex; height: 32px; border-bottom: 2px solid #fff; background: #ece9d8; }
.tabnav { display: flex; flex: none; width: 108px; gap: 15px; padding-left: 6px; border: solid #aca899; border-width: 2px 2px 0 2px; }
.tabnav button, .tabnav svg { width: 12px; height: 100%; }
.tabnav svg { height: 12px; }
.tabs { display: flex; flex: 1; border-top: 2px solid #aca899; }
.tab { position: relative; width: 110px; height: 30px; margin-right: -14px; margin-top: -2px; }
.tab svg { position: absolute; inset: 0; width: 110px; height: 31px; }
.tab span { position: relative; }
.tab.active { z-index: 1; font-weight: bold; }
.hscroll { display: flex; align-items: center; flex: 0 1 758px; gap: 3px; padding-right: 28px; background: linear-gradient(90deg, #f6f5ef calc(100% - 28px), #ece9d8 calc(100% - 28px)); }
.hscroll button { width: 25px; height: 26px; }
.hscroll .thumb { width: 83%; height: 27px; background: repeating-linear-gradient(90deg, #8faef0 0 2px, transparent 2px 4px) center / 12px 10px no-repeat, linear-gradient(#cbdafd, #b5cbfa); }
.split { width: 7px; height: 30px; border: solid #000; border-width: 0 2px 0 0; background: #ece9d8; }

/* Status bar */
.status { display: flex; align-items: center; gap: 2px; height: 33px; padding: 4px 3px 0 0; font-size: 16px; }
.msg { flex: 1; padding-left: 6px; }
.status i { width: 36px; height: 26px; border: 2px solid #d3d0c6; }
.status .w50 { width: 50px; }
.status .w163 { width: 163px; }
.status .w43 { width: 43px; }
.status .w29 { width: 29px; }

/* Taskbar */
.taskbar { display: flex; height: 58px; background: linear-gradient(#2c62c8 0, #3a8cf0 3px, #2c70e0 9px, #2f7de8 11px, #2259d8 16px, #245edb 48px, #1a43a8); color: #fff; }
.start { align-self: flex-end; justify-content: flex-start; gap: 8px; width: 153px; height: 51px; padding: 4px 0 0 15px; border-radius: 0 6px 8px 0; background: linear-gradient(#7fbb7c 0, #3f9c40 10px, #36913a 24px, #3caa3e 42px, #2b7f2f); box-shadow: inset -3px 0 4px #226a28; font: italic bold 29px/44px "Open Sans", sans-serif; text-shadow: 2px 2px 2px #1c4a1e; }
.start svg { width: 27px; height: 32px; }
.quick { display: flex; align-items: center; gap: 10px; flex: none; width: 221px; padding: 6px 4px 0 16px; }
.quick svg { width: 24px; height: 28px; }
.dots { width: 6px; height: 32px; background: repeating-linear-gradient(#153a9e 0 3px, transparent 3px 7px); }
.more { flex: 1; padding-left: 13px; line-height: 20px; align-self: flex-start; margin-top: 6px; font-size: 22px; color: #9ccbff; }
.task { align-self: center; justify-content: flex-start; gap: 7px; width: 230px; height: 42px; margin: 9px 3px 0 0; padding-left: 13px; border-radius: 3px; background: linear-gradient(#5a9bfa, #3b7ff3 8px, #3a7cf2 34px, #2a62d4); }
.task svg { width: 23px; height: 28px; }
.task.active { padding-top: 2px; background: linear-gradient(#143f9c, #1c50b8 6px, #1d52bb); }
.tray { display: flex; align-items: center; gap: 4px; margin-left: auto; padding: 0 20px 0 0; align-self: flex-end; height: 50px; border-left: 1px solid #0a3d96; background: linear-gradient(#1fb0f2, #1290e8 8px, #0f93ec 42px, #0a60c8); }
.tray svg { width: 22px; height: 26px; }
.tray .expand { margin-left: -14px; }
.tray .expand svg { width: 26px; height: 34px; }
.tray .book { margin: 0 7px 0 4px; }
```
